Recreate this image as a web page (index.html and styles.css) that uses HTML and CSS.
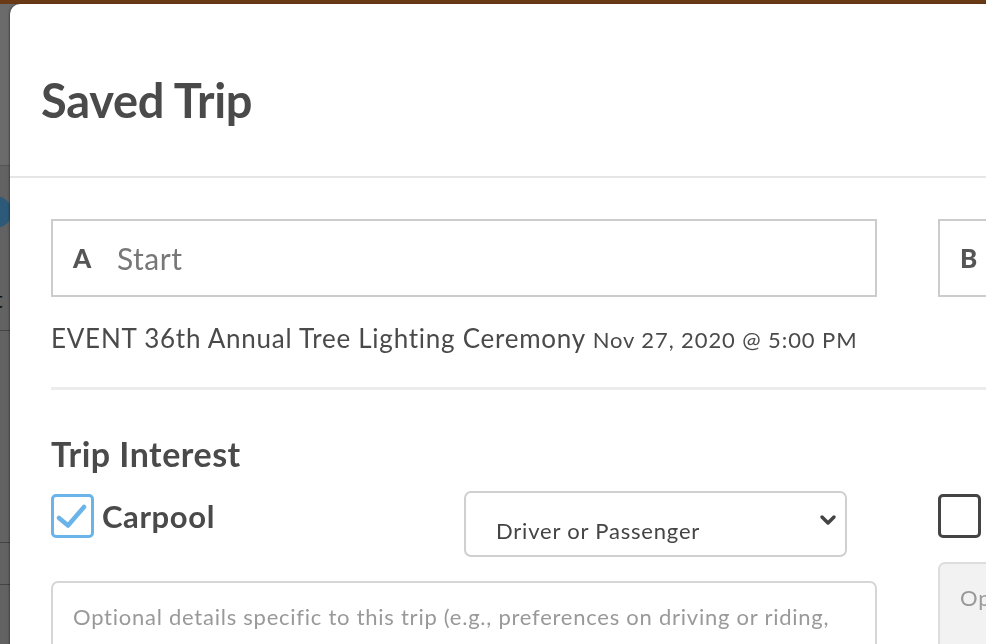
FILE: index.html
```html
<!DOCTYPE html>
<html lang="en">
<head>
    <meta charset="UTF-8">
    <meta name="viewport" content="width=device-width, initial-scale=1.0">
    <title>Saved Trip</title>
    <link rel="stylesheet" href="styles.css">
</head>
<body>
    <div class="page">
        <div class="page-header"></div>
        <div class="page-hero"></div>
        <div class="page-section">
            <span class="page-blob"></span>
            <span class="page-text">t</span>
        </div>
        <div class="page-row"></div>
        <div class="page-row short"></div>
    </div>

    <div class="modal">
        <div class="modal-header">
            <h1>Saved Trip</h1>
        </div>

        <div class="modal-body">
            <div class="columns">
                <div class="column">
                    <label class="location">
                        <span class="location-letter">A</span>
                        <input type="text" placeholder="Start">
                    </label>
                    <p class="event">
                        EVENT 36th Annual Tree Lighting Ceremony <span class="event-date">Nov 27, 2020 @ 5:00 PM</span>
                    </p>
                </div>
                <div class="column">
                    <label class="location">
                        <span class="location-letter">B</span>
                        <input type="text">
                    </label>
                </div>
            </div>

            <hr class="divider">

            <h2>Trip Interest</h2>

            <div class="columns">
                <div class="column">
                    <div class="interest">
                        <label class="check">
                            <span class="box checked">
                                <svg width="43" height="44" viewBox="0 0 43 44">
                                    <path d="M8 24 L17 31.5 L33 13" fill="none" stroke="#6ab4ea" stroke-width="4.5" stroke-linecap="round" stroke-linejoin="round"/>
                                </svg>
                            </span>
                            Carpool
                        </label>
                        <div class="select">
                            <span>Driver or Passenger</span>
                            <svg width="18" height="12" viewBox="0 0 18 12">
                                <path d="M3 3 L9 9 L15 3" fill="none" stroke="#444" stroke-width="3.5" stroke-linecap="round" stroke-linejoin="round"/>
                            </svg>
                        </div>
                    </div>
                    <textarea rows="3" placeholder="Optional details specific to this trip (e.g., preferences on driving or riding, "></textarea>
                </div>
                <div class="column">
                    <div class="interest">
                        <label class="check">
                            <span class="box"></span>
                        </label>
                    </div>
                    <textarea rows="3" disabled placeholder="Optional details"></textarea>
                </div>
            </div>
        </div>
    </div>
</body>
</html>
```

FILE: styles.css
```css
body {
    font-family: 'Lato', 'Liberation Sans', sans-serif;
    background-color: #626262;
    color: #4a4a4a;
    margin: 0;
    padding: 0;
    height: 100vh;
    overflow: hidden;
}

/* dimmed page behind the modal */
.page-header {
    height: 4px;
    background-color: #6a3a16;
}

.page-hero {
    height: 161px;
    background-color: #6b6b6b;
    border-bottom: 1px solid #555;
}

.page-section {
    height: 164px;
    border-bottom: 1px solid #444;
    position: relative;
}

.page-blob {
    position: absolute;
    top: 30px;
    left: -22px;
    width: 34px;
    height: 32px;
    border-radius: 50%;
    background-color: #2d5a78;
}

.page-text {
    position: absolute;
    top: 118px;
    left: -6px;
    font-size: 24px;
    color: #111;
}

.page-row {
    height: 211px;
    border-bottom: 1px solid #444;
}

.page-row.short {
    height: 41px;
}

/* modal */
.modal {
    position: fixed;
    top: 4px;
    left: 10px;
    width: 1100px;
    height: 700px;
    background: #ffffff;
    border-radius: 10px 10px 0 0;
    box-shadow: -1px 0 2px rgba(0, 0, 0, 0.35);
}

.modal-header {
    padding: 20px 31px 0;
    height: 152px;
    border-bottom: 2px solid #e6e6e6;
    display: flex;
    align-items: center;
}

h1 {
    margin: 0;
    font-size: 47px;
    font-weight: 700;
    letter-spacing: -0.3px;
    color: #4a4a4a;
}

.modal-body {
    padding: 41px 0 0 41px;
}

.columns {
    display: flex;
    gap: 61px;
}

.column {
    width: 826px;
    flex-shrink: 0;
}

.location {
    display: flex;
    align-items: center;
    height: 78px;
    border: 2px solid #ccc;
    box-sizing: border-box;
    padding: 0 20px;
}

.location-letter {
    font-size: 26px;
    font-weight: 900;
    color: #555;
    width: 44px;
}

.location input {
    border: none;
    outline: none;
    font-family: inherit;
    font-size: 30px;
    letter-spacing: 0.5px;
    color: #4a4a4a;
    padding: 0;
    flex: 1;
}

.location input::placeholder {
    color: #777;
}

.event {
    margin: 25px 0 0;
    font-size: 26px;
    letter-spacing: 0.75px;
    color: #4a4a4a;
}

.event-date {
    font-size: 22px;
    letter-spacing: 0.9px;
}

.divider {
    border: none;
    height: 3px;
    background-color: #ececec;
    margin: 33px 0 0;
}

h2 {
    margin: 47px 0 0;
    font-size: 34px;
    font-weight: 700;
    letter-spacing: 0.5px;
    line-height: 1;
}

.interest {
    display: flex;
    align-items: flex-start;
    justify-content: space-between;
    margin-top: 20px;
    padding-right: 30px;
}

.check {
    display: flex;
    align-items: center;
    gap: 8px;
    margin-top: 3px;
    font-size: 31px;
    font-weight: 700;
    letter-spacing: 0.6px;
    color: #4a4a4a;
}

.box {
    display: block;
    width: 43px;
    height: 44px;
    box-sizing: border-box;
    border: 3px solid #444;
    border-radius: 5px;
}

.box.checked {
    border-color: #6ab4ea;
    position: relative;
}

.box.checked svg {
    position: absolute;
    top: -3px;
    left: -3px;
}

.select {
    width: 383px;
    height: 66px;
    box-sizing: border-box;
    border: 2px solid #d0d0d0;
    border-radius: 7px;
    display: flex;
    align-items: center;
    justify-content: space-between;
    padding: 12px 8px 0 30px;
    font-size: 22px;
    letter-spacing: 0.8px;
    color: #444;
}

.select svg {
    margin-top: -20px;
}

textarea {
    display: block;
    width: 100%;
    box-sizing: border-box;
    margin-top: 24px;
    border: 2px solid #d6d6d6;
    border-radius: 7px;
    padding: 20px 20px;
    font-family: inherit;
    font-size: 22px;
    letter-spacing: 0.75px;
    resize: none;
    color: #4a4a4a;
}

textarea::placeholder {
    color: #999;
}

textarea:disabled {
    background-color: #f2f2f2;
    border-color: #ddd;
}
```
